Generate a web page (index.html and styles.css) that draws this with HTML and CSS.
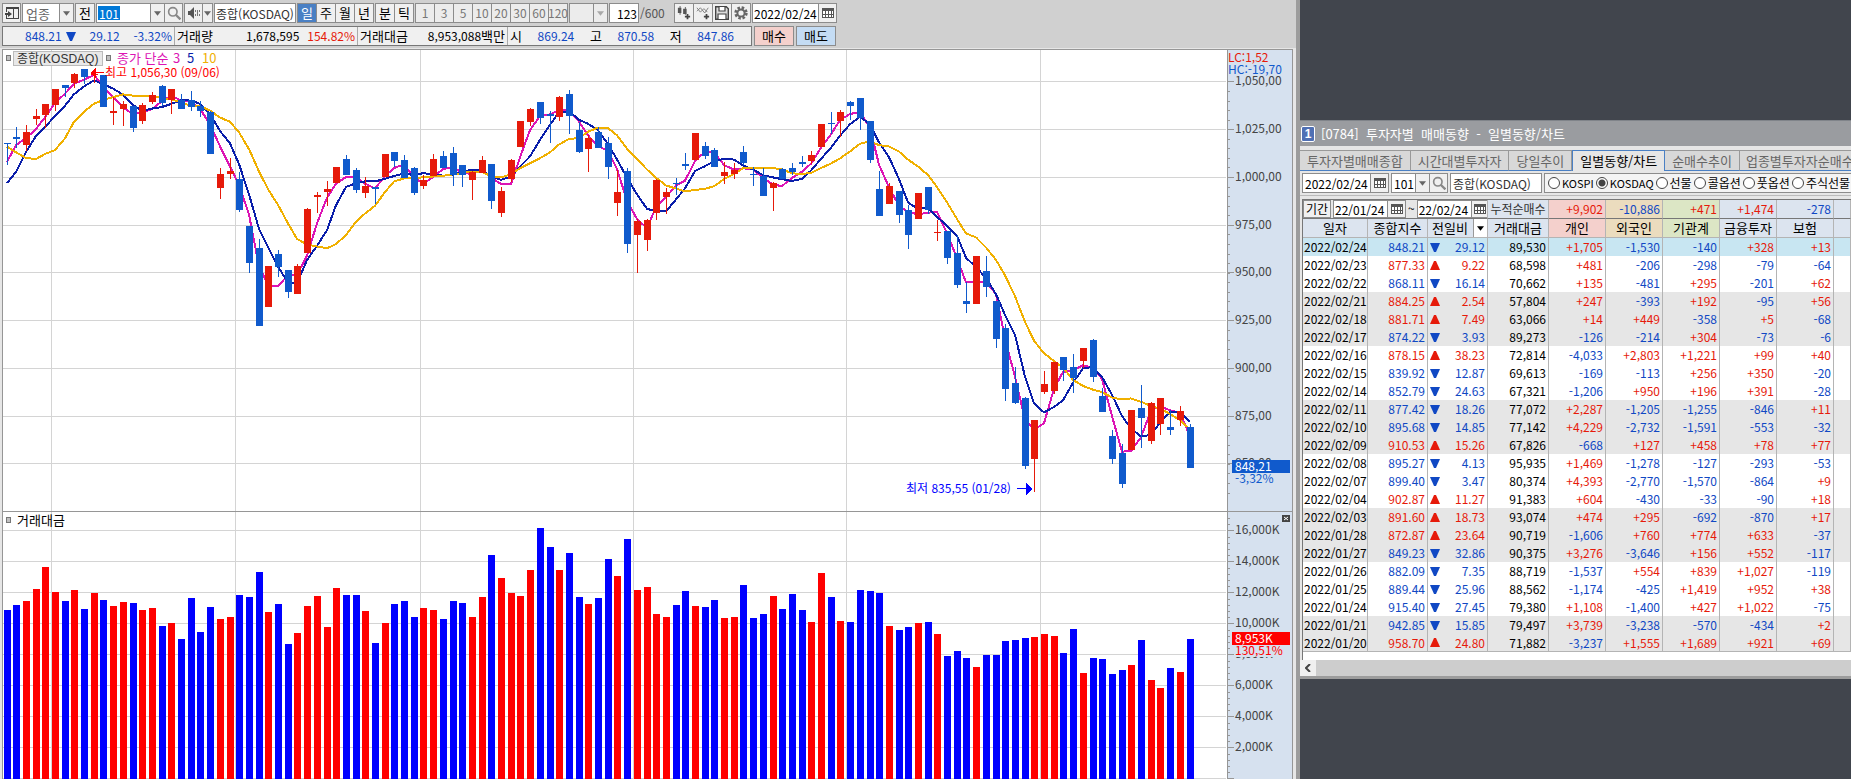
FILE: index.html
```html
<!DOCTYPE html>
<html lang="ko">
<head>
<meta charset="utf-8">
<title>종합(KOSDAQ)</title>
<link rel="stylesheet" href="styles.css">
</head>
<body>
<svg class="defs" aria-hidden="true">
  <symbol id="i-cal" viewBox="-1 -1 14 14"><path fill="#555" d="M0 1h12v10H0z"/><path fill="#fff" d="M1 4h2v3H1zM4 4h2v3H4zM7 4h2v3H7zM10 4h1v3h-1zM1 8h2v2H1zM4 8h2v2H4zM7 8h2v2H7zM10 8h1v2h-1z"/></symbol>
  <symbol id="i-search" viewBox="0 0 12 12"><circle cx="5" cy="5" r="3.6" fill="none" stroke="#888" stroke-width="1.4"/><path d="M7.5 7.5l4 4" stroke="#888" stroke-width="2"/></symbol>
  <symbol id="i-down" viewBox="0 0 8 5"><path fill="#666" d="M0 0h8L4 5z"/></symbol>
  <symbol id="i-panel" viewBox="0 0 14 14"><path fill="#444" d="M1 1h13v12H1v-4h1v3h6V3H2v3H1zM9 3v9h4V3z"/><path fill="#444" d="M0 7h3V5l4 3-4 3V9H0z"/></symbol>
  <symbol id="i-speaker" viewBox="0 0 14 14"><path fill="#555" d="M1 5h2l4-4v12L3 9H1z"/><path fill="#777" d="M8 4h1v2H8zM8 8h1v2H8zM10 4h1v6h-1zM12 4h1v2h-1zM12 8h1v2h-1z"/></symbol>
  <symbol id="i-candle" viewBox="0 0 16 16"><path fill="#555" d="M1 2h4v6H1zM3 0h1v10H3zM7 3h4v6H7zM9 1h1v9H9z"/><path fill="#444" d="M11 9h2v2h2v2h-2v2h-2v-2H9v-2h2z"/></symbol>
  <symbol id="i-line" viewBox="0 0 16 16"><path d="M1 6l4-4 5 6 4-6M1 2l4 5 4-4 4 4" fill="none" stroke="#777"/><path fill="#444" d="M11 9h2v2h2v2h-2v2h-2v-2H9v-2h2z"/></symbol>
  <symbol id="i-save" viewBox="0 0 14 14"><path d="M.7.7h10.6l2 2v10.600H.7z" fill="#ddd" stroke="#444" stroke-width="1.4"/><path d="M4 1v4h6V1M3 13V8h8v5" fill="#fff" stroke="#444" stroke-width="1.2"/></symbol>
  <symbol id="i-gear" viewBox="0 0 14 14"><circle cx="7" cy="7" r="5.2" fill="none" stroke="#666" stroke-width="3" stroke-dasharray="2.4 1.684"/><circle cx="7" cy="7" r="3.6" fill="none" stroke="#666" stroke-width="2"/></symbol>
</svg>
<main class="desktop">
  <section class="chart-window">
    <div class="toolbar">
      <button class="btn icon" aria-label="패널"><svg><use href="#i-panel"/></svg></button>
      <div class="combo"><input class="w37 muted" aria-label="구분" value="업종"><button class="btn drop" aria-label="구분 열기"><svg><use href="#i-down"/></svg></button></div>
      <button class="btn sq">전</button>
      <div class="combo"><input class="code" aria-label="업종 코드" value="101"><button class="btn drop" aria-label="종목 열기"><svg><use href="#i-down"/></svg></button><button class="btn icon" aria-label="검색"><svg><use href="#i-search"/></svg></button></div>
      <div class="combo"><button class="btn icon" aria-label="소리"><svg><use href="#i-speaker"/></svg></button><button class="btn tiny" aria-label="소리 열기"><svg><use href="#i-down"/></svg></button></div>
      <input class="w82" aria-label="종목명" value="종합(KOSDAQ)">
      <div class="combo"><button class="btn sq on">일</button><button class="btn sq">주</button><button class="btn sq">월</button><button class="btn sq">년</button></div>
      <div class="combo"><button class="btn sq">분</button><button class="btn sq">틱</button></div>
      <div class="combo off"><button class="btn sq">1</button><button class="btn sq">3</button><button class="btn sq">5</button><button class="btn sq">10</button><button class="btn sq">20</button><button class="btn sq">30</button><button class="btn sq">60</button><button class="btn sq">120</button></div>
      <div class="combo off"><button class="btn blank" aria-label="분 간격"></button><button class="btn drop" aria-label="간격 열기"><svg><use href="#i-down"/></svg></button></div>
      <div class="count"><input class="w30" aria-label="봉 개수" value="123"><span>/600</span></div>
      <div class="combo tools"><button class="btn icon" aria-label="지표 추가"><svg><use href="#i-candle"/></svg></button><button class="btn icon" aria-label="추세선 추가"><svg><use href="#i-line"/></svg></button><button class="btn icon" aria-label="저장"><svg><use href="#i-save"/></svg></button><button class="btn icon" aria-label="설정"><svg><use href="#i-gear"/></svg></button></div>
      <div class="combo"><input class="w67" aria-label="날짜" value="2022/02/24"><button class="btn icon" aria-label="달력"><svg><use href="#i-cal"/></svg></button></div>
    </div>
    <div class="quote">
      <div class="quote-box">
        <div class="cell c1 down"><span>848.21</span><svg viewBox="0 0 10 9"><path d="M0 0h10L6 9H4z"/></svg><span class="n2">29.12</span><span class="n3">-3.32%</span></div>
        <div class="cell c2"><b>거래량</b><span>1,678,595</span><span class="up n3">154.82%</span></div>
        <div class="cell c3"><b>거래대금</b><span>8,953,088<b>백만</b></span></div>
        <div class="cell c4"><b>시</b><span class="down">869.24</span><b>고</b><span class="down">870.58</span><b>저</b><span class="down">847.86</span></div>
      </div>
      <button class="btn trade buy">매수</button>
      <button class="btn trade sell">매도</button>
    </div>
    <div class="chart"><svg id="chart" viewBox="2 49 1291 730" role="img" aria-label="종합(KOSDAQ) 일봉 차트"></svg></div>
  </section>
  <section class="right">
    <div class="trend-window">
      <h1 class="title"><span class="badge">1</span>[0784]  투자자별  매매동향  -  일별동향/차트</h1>
      <nav class="tabs">
        <a href="#a">투자자별매매종합</a><a href="#b">시간대별투자자</a><a href="#c">당일추이</a><a href="#d" class="active">일별동향/차트</a><a href="#e">순매수추이</a><a href="#f" class="rest">업종별투자자순매수</a>
      </nav>
      <div class="filters">
        <div class="combo"><input class="w68" aria-label="조회일" value="2022/02/24"><button class="btn icon" aria-label="달력"><svg><use href="#i-cal"/></svg></button></div>
        <div class="combo"><input class="w24" aria-label="업종 코드" value="101"><button class="btn drop" aria-label="코드 열기"><svg><use href="#i-down"/></svg></button><button class="btn icon" aria-label="검색"><svg><use href="#i-search"/></svg></button></div>
        <input class="w92" aria-label="업종명" value="종합(KOSDAQ)">
        <div class="radios">
          <label class="en"><input type="radio" name="m">KOSPI</label><label class="en"><input type="radio" name="m" checked>KOSDAQ</label><label><input type="radio" name="m">선물</label><label><input type="radio" name="m">콜옵션</label><label><input type="radio" name="m">풋옵션</label><label><input type="radio" name="m">주식선물</label>
        </div>
      </div>
      <div class="sheet">
        <table>
          <colgroup><col class="k65"><col class="k60"><col class="k60"><col class="k61"><col class="k57"><col class="k57"><col class="k57"><col class="k57"><col class="k57"><col></colgroup>
          <thead>
            <tr class="sum">
              <th colspan="3"><div class="period"><button class="btn term">기간</button><div class="combo"><input class="w54" aria-label="시작일" value="22/01/24"><button class="btn icon" aria-label="시작일 달력"><svg><use href="#i-cal"/></svg></button></div><span>~</span><div class="combo"><input class="w54" aria-label="종료일" value="22/02/24"><button class="btn icon" aria-label="종료일 달력"><svg><use href="#i-cal"/></svg></button></div></div></th>
              <th class="lead">누적순매수</th><td class="pink up">+9,902</td><td class="tan down">-10,886</td><td class="green up">+471</td><td class="blue up">+1,474</td><td class="blue down">-278</td><td class="blue"></td>
            </tr>
            <tr class="head"><th>일자</th><th>종합지수</th><th><div class="sort">전일비<button aria-label="전일비 선택"><svg viewBox="0 0 8 5"><path d="M0 0h8L4 5z"/></svg></button></div></th><th>거래대금</th><th class="pink">개인</th><th class="tan">외국인</th><th class="green">기관계</th><th>금융투자</th><th>보험</th><th></th></tr>
          </thead>
          <tbody id="rows"></tbody>
        </table>
      </div>
      <div class="hscroll"><button aria-label="왼쪽으로"><svg viewBox="0 0 6 8"><path d="M5 0L1 4l4 4" fill="none" stroke="#444" stroke-width="2"/></svg></button><i></i></div>
    </div>
  </section>
</main>
<script src="app.js"></script>
</body>
</html>
```
FILE: styles.css
```css
* { box-sizing: border-box; }
body { margin: 0; overflow: hidden; font: 13px/16px "Noto Sans CJK KR", sans-serif; color: #000; }
.defs { position: absolute; width: 0; height: 0; }
.desktop { display: grid; grid-template-columns: 1300fr 551fr; height: 100vh; overflow: hidden; background: #41454d; }
.up { color: #e61a0a; fill: #e61a0a; }
.down { color: #1048c4; fill: #1048c4; }

input, button { font: inherit; color: inherit; margin: 0; border-radius: 0; }
input:not([type]) { height: 20px; border: 1px solid #8c8c8c; background: #fff; padding: 0 0 0 1px; font-size: 12px; min-width: 0; }
.btn { height: 20px; padding: 0; border: 1px solid #8c8c8c; background: #f0f0f0; display: flex; align-items: center; justify-content: center; flex: none; }
.btn.icon { width: 19px; }
.btn.icon svg { width: 14px; height: 14px; }
.btn.sq { width: 20px; }
.btn.drop { width: 15px; }
.btn.tiny { width: 11px; }
.btn.drop svg, .btn.tiny svg { width: 7px; height: 5px; }
.btn.blank { width: 25px; }
.btn.on { background: #4a80c4; color: #fff; }
.tools .btn.icon { width: 20px; }
.combo { display: flex; }
.combo > * + * { margin-left: -1px; }
.off { color: #777; }
.off .btn { background: #ececec; font-size: 12px; }
.off svg { opacity: .5; }
.w24 { width: 25px; } .w30 { width: 30px; } .w37 { width: 38px; } .w54 { width: 55px; }
.w67 { width: 67px; } .w68 { width: 69px; } .w82 { width: 82px; } .w92 { width: 92px; }
input.w30 { text-align: right; padding-right: 1px; }
input.w37 { color: #666; font-size: 13px; padding-left: 3px; }
input.w68, input.w24, input.w92 { padding-left: 2px; }
input.w82, input.w92 { color: #333; }
input.code { width: 55px; padding-left: 2px; color: #fff; background: linear-gradient(#0078d7, #0078d7) 1px 2px / 22px 14px no-repeat #fff; }

.chart-window { background: #d0d0d0; border-right: 4px solid #9c9c9c; overflow: hidden; }
.toolbar { display: flex; gap: 1px; padding: 3px 2px 0; }
.count { display: flex; align-items: center; font-size: 12px; width: 64px; color: #555; gap: 1px; }
.count input { color: #000; }
.quote { display: flex; gap: 2px; padding: 3px 2px 2px; }
.quote-box { width: 750px; height: 20px; display: flex; border: 1px solid #777; background: #f0f0f0; font-size: 12px; line-height: 18px; }
.quote b { font-weight: 400; font-size: 13px; }
.cell { display: flex; padding: 0 2px; align-items: center; border-right: 1px solid #aaa; }
.cell:last-child { border: 0; }
.c1 { width: 172px; padding-left: 22px; }
.c1 svg { width: 10px; height: 9px; margin-left: 4px; }
.c1 .n2, .c1 .n3 { margin-left: auto; }
.c2 { width: 183px; }
.c2 span:nth-child(2) { margin-left: auto; }
.c2 .n3 { margin-left: 8px; }
.c3 { width: 150px; justify-content: space-between; }
.c4 { flex: 1; justify-content: space-between; padding: 0 17px 0 2px; }
.trade { width: 40px; }
.buy { background: #f4d0cc; }
.sell { background: #c4dcf4; }
.chart { padding: 0 3px 0 2px; border-top: 1px solid #e6e6e6; background: #e6e6e6; }
.chart svg { display: block; width: 100%; height: auto; }
.chart text { font: 12px "Noto Sans CJK KR", sans-serif; }
.chart .ko { font-size: 13px; }
.chart .wide { font-family: "Liberation Sans", "Noto Sans CJK KR", sans-serif; }

.right { padding-top: 120px; min-width: 0; }
.trend-window { background: #e6e6e6; border-bottom: 3px solid #9c9c9c; overflow: hidden; }
.title { margin: 0 0 4px; height: 26px; padding-left: 1px; display: flex; align-items: center; gap: 6px; background: #9a9ca0; border-top: 1px solid #80848a; color: #fff; font-size: 13px; font-weight: 400; white-space: pre; }
.badge { width: 14px; height: 16px; border: 1px solid #fff; border-radius: 2px; background: #5070b4; font: bold 12px/14px "Liberation Sans", sans-serif; text-align: center; }
.tabs { display: flex; height: 21px; }
.tabs a { flex: none; padding: 0 7px; line-height: 19px; color: #666; text-decoration: none; white-space: nowrap; background: #d8d8d8; border: 1px solid #999; border-left: 0; border-bottom: 1px solid #4a80c4; }
.tabs a.active { background: #e6e6e6; color: #000; border: 1px solid #4a80c4; border-bottom: 0; }
.tabs a.rest { flex: 1 0 auto; padding: 0 6px; }
.filters { display: flex; gap: 2px; padding: 2px 0 2px 2px; border-bottom: 1px solid #bbb; }
.radios { flex: 1; display: flex; gap: 2px; height: 20px; border: 1px solid #8c8c8c; border-right: 0; background: #f4f4f4; padding-left: 3px; overflow: hidden; font-size: 12px; }
.radios label { flex: none; display: flex; align-items: center; gap: 2px; }
.radios .en { font-size: 11px; }
.radios input { appearance: none; width: 12px; height: 12px; margin: 0; border: 1px solid #444; border-radius: 50%; background: #fff; }
.radios input:checked { background: radial-gradient(circle, #444 3px, #fff 4px); }
.sheet { margin: 3px 0 0 2px; height: 461px; background: #fff; border-top: 1px solid #777; border-left: 1px solid #777; }
table { width: 100%; border-collapse: separate; border-spacing: 0; table-layout: fixed; }
.k65 { width: 65px; } .k60 { width: 60px; } .k61 { width: 61px; } .k57 { width: 57px; }
th, td { padding: 0 2px; height: 18px; line-height: 16px; font-weight: 400; text-align: right; white-space: nowrap; border-right: 1px solid #b4b4b4; }
td { font-size: 12px; }
th { text-align: center; font-size: 13px; background: #dce4ef; }
.sum th, .sum td { border-bottom: 1px solid #777; height: 19px; }
.sum th { padding: 0; color: #333; font-size: 12px; }
.head th { border-bottom: 1px solid #b4b4b4; height: 19px; }
.pink { background: #f4d0cc; } .tan { background: #ebdcbe; } .green { background: #dce6c5; } .blue { background: #dce4ef; }
.period { display: flex; gap: 2px; background: #e6e6e6; height: 18px; color: #000; overflow: hidden; }
.period .btn, .period input:not([type]) { height: 18px; }
.term { width: 28px; }
.sort { display: flex; align-items: center; justify-content: space-between; padding-left: 2px; margin-right: -2px; }
.sort button { width: 14px; height: 18px; padding: 0 3px; border: 1px solid #999; border-width: 0 0 0 1px; background: #fff; display: flex; align-items: center; }
.sort svg { width: 8px; height: 5px; }
.chg { display: flex; align-items: center; justify-content: space-between; }
.chg svg { width: 10px; height: 9px; }
tbody .day { text-align: left; padding: 0 0 0 1px; }
tbody tr.alt { background: #e6e6e6; }
tbody tr.now { background: #c8e6f2; }
tbody tr:last-child td { border-bottom: 1px solid #b4b4b4; }
.hscroll { display: flex; height: 16px; background: #f0f0f0; }
.hscroll button { width: 16px; padding: 0 5px; border: 0; background: none; display: flex; align-items: center; }
.hscroll i { flex: 1; background: #cdcdcd; }
```
FILE: app.js
```js
// Candles: direction, high, body top, body bottom, low (thirds of a pixel), volume top.
const raw = `b430 430 433 494 300|b381 411 416 444 285|r375 396 434 452 273|r327 348 356 375 237|r312 312 344 383 171|r267 267 314 332 246|b255 255 263 291 273|r219 222 249 264 240|b207 207 231 251 297|r218 221 226 248 249|b225 225 320 320 270|r291 333 338 375 288|r303 312 326 378 276|b318 318 383 395 279|r309 315 362 372 300|r276 285 305 312 294|b255 258 308 318 348|r267 267 299 342 339|b282 299 326 326 387|b273 300 320 332 264|b303 318 332 351 366|b333 336 461 461 291|r504 522 563 597 327|r474 513 521 537 321|b516 537 629 636 255|b678 678 789 819 261|b717 744 978 978 186|r798 798 921 921 306|b750 762 801 831 282|b810 810 876 894 402|r792 798 881 881 369|r624 627 759 759 288|r576 585 591 639 258|r543 567 575 618 351|r501 501 548 548 234|b465 477 524 524 255|b504 510 570 578 255|r531 558 579 594 303|b561 562 567 612 399|r462 462 530 530 339|b456 456 483 500 282|b465 480 533 533 273|b501 504 579 585 321|r525 540 558 567 294|r462 477 527 527 300|b453 468 503 503 327|b441 459 524 558 273|b495 495 524 561 279|r513 516 540 600 321|r468 480 519 519 261|b492 492 603 627 135|r561 573 639 651 204|r477 480 536 545 249|r363 363 441 441 258|r324 327 365 378 180|b306 306 354 372 54|b333 343 347 429 111|r288 291 350 362 180|b270 282 347 402 129|b365 390 456 459 261|r405 414 446 516 282|b381 396 444 444 264|b411 429 500 537 147|r510 576 609 648 198|b504 513 731 759 87|r658 663 705 819 240|r656 660 720 753 231|r537 540 639 660 312|r564 576 591 642 321|b534 549 553 585 285|b459 492 498 510 243|r399 399 480 480 288|b426 438 467 477 291|b444 450 500 500 270|r486 516 528 552 324|r489 510 522 537 321|b438 456 489 495 225|b501 522 526 558 324|b504 528 588 588 312|r546 549 564 633 258|b504 507 536 536 297|b489 504 515 524 252|b468 486 491 501 300|r453 465 483 492 336|r372 372 441 441 189|b336 369 373 402 261|r330 336 362 411 333|b303 306 318 360 336|b294 294 353 390 240|b363 363 480 489 243|b513 567 648 648 249|r549 558 612 612 348|b573 573 645 669 360|b615 630 705 747 351|r579 579 657 657 339|b561 561 630 642 336|r660 695 699 723 372|b693 693 774 792 438|b705 759 854 864 423|b846 903 912 939 444|r768 768 912 912 471|b768 813 860 891 435|b903 903 1016 1044 435|b972 984 1167 1203 393|b1101 1149 1209 1212 390|b1191 1194 1398 1407 384|r1260 1260 1377 1476 381|r1113 1152 1176 1182 372|r1086 1086 1173 1182 378|b1071 1071 1110 1143 429|b1062 1101 1134 1179 357|r1044 1044 1083 1104 489|b1017 1020 1131 1146 444|b1164 1188 1236 1236 447|b1290 1308 1377 1392 492|b1332 1359 1452 1464 480|r1230 1230 1350 1350 465|b1155 1224 1254 1344 390|r1206 1209 1323 1332 510|r1194 1194 1272 1305 534|b1230 1281 1290 1305 474|r1218 1233 1260 1278 486|b1272 1281 1404 1404 387`;
const bars = raw.split('|').map((s, i) => {
  const n = s.slice(1).split(' ').map(Number);
  return { up: s[0] === 'r', y: n.slice(0, 4).map(v => Math.round(v / 3)), v: 510 + Math.round(n[4] / 3), x: Math.floor(4 + i * 1183 / 122 + 0.02) };
});
let out = '';
const rect = (x, y, w, h, f, extra = '') => out += `<rect x="${x}" y="${y}" width="${w}" height="${h}" fill="${f}" ${extra}/>`;
const text = (x, y, s, f, cls = '') => out += `<text x="${x}" y="${y}" fill="${f}" class="${cls}">${s}</text>`;
out += '<g shape-rendering="crispEdges">';
rect(2, 49, 1291, 730, '#969696');
rect(3, 50, 1224, 461, '#fff'); rect(3, 512, 1224, 267, '#fff');
rect(1228, 50, 64, 729, '#d6e1ef'); rect(1228, 511, 64, 1, '#969696');
const prices = [81, 129, 177, 225, 272, 320, 368, 416, 463];
const vols = [530, 561, 592, 623, 654, 685, 716, 747, 778];
for (const y of [...prices, ...vols]) rect(3, y, 1223, 1, '#d4d4d4');
for (const x of [51, 235, 420, 633, 846, 1040]) { rect(x, 50, 1, 461, '#d4d4d4'); rect(x, 512, 1, 267, '#d4d4d4'); }
for (const y of [...prices, ...vols]) rect(1228, y, 6, 1, '#969696');
for (let k = 0; k < 43; k++) rect(1228, Math.round(91 + k * 9.56), 2, 1, '#969696');
for (let k = 0; k < 43; k++) rect(1228, Math.round(518 + k * 6.2), 2, 1, '#969696');
const close = bars.map(b => b.up ? b.y[1] : b.y[2]);
const average = (n, lead, colour) => {
  const pts = bars.map((b, i) => {
    const y = i < n - 1 ? lead[i] / 3 : close.slice(i - n + 1, i + 1).reduce((a, c) => a + c) / n;
    return `${b.x + 3},${y.toFixed(1)}`;
  });
  out += `<polyline points="${pts.join(' ')}" fill="none" stroke="${colour}" stroke-width="2"/>`;
};
average(3, [486, 435], '#dc14b4');
average(5, [549, 516, 456, 408], '#0a1eaa');
average(10, [440, 457, 474, 477, 462, 450, 415, 365, 335], '#f0b000');
for (const b of bars) {
  const f = b.up ? '#e61a0a' : '#105acc', [h, t, m, l] = b.y;
  rect(b.x + 3, h, 1, Math.max(1, l - h), f);
  rect(b.x, t, 7, Math.max(1, m - t), f);
  rect(b.x, b.v, 7, 779 - b.v, b.up ? '#f00' : '#00f');
}
rect(6.5, 55.5, 4, 5, '#c0c0c0', 'stroke="#777"'); rect(106.5, 55.5, 4, 5, '#c0c0c0', 'stroke="#777"'); rect(6.5, 517.5, 4, 5, '#c0c0c0', 'stroke="#777"');
rect(13.5, 51.5, 89, 14, '#e8e8e8', 'stroke="#bbb"');
out += '<path d="M90 73l6-5v10zM96 72h8v1h-8z" fill="#f00"/><path d="M1017 488h9v-5l6 6-6 6v-6h-9z" fill="#00f"/></g>';
text(17, 63, '종합(KOSDAQ)', '#333', 'wide');
text(117, 63, '종가 단순', '#dc14b4', 'ko'); text(173, 63, '3', '#dc14b4', 'ko'); text(187, 63, '5', '#0a1eaa', 'ko'); text(202, 63, '10', '#f0b000', 'ko');
text(105, 77, '최고 1,056,30 (09/06)', '#f00');
text(906, 493, '최저 835,55 (01/28)', '#00f');
text(17, 525, '거래대금', '#000', 'ko');
['1,050,00', '1,025,00', '1,000,00', '975,00', '950,00', '925,00', '900,00', '875,00', '850,00'].forEach((s, i) => text(1235, prices[i] + 4, s, '#444'));
['16,000K', '14,000K', '12,000K', '10,000K', '8,000K', '6,000K', '4,000K', '2,000K'].forEach((s, i) => text(1235, vols[i] + 4, s, '#444'));
rect(1228, 51, 63, 25, '#d6e1ef');
text(1228, 62, 'LC:1,52', '#e61a0a'); text(1228, 74, 'HC:-19,70', '#105acc');
rect(1232, 460, 58, 13, '#105acc'); text(1235, 471, '848,21', '#fff'); text(1235, 483, '-3,32%', '#105acc');
rect(1235, 645, 50, 12, '#d6e1ef');
rect(1232, 632, 58, 13, '#f00'); text(1235, 643, '8,953K', '#fff'); text(1235, 655, '130,51%', '#f00');
rect(1282, 515, 8, 7, '#444');
out += '<path d="M1284 517l4 3m0-3l-4 3" stroke="#fff"/>';
document.getElementById('chart').innerHTML = out;

const rows = `02/24 848.21 -29.12 89,530 +1,705 -1,530 -140 +328 +13
02/23 877.33 9.22 68,598 +481 -206 -298 -79 -64
02/22 868.11 -16.14 70,662 +135 -481 +295 -201 +62
02/21 884.25 2.54 57,804 +247 -393 +192 -95 +56
02/18 881.71 7.49 63,066 +14 +449 -358 +5 -68
02/17 874.22 -3.93 89,273 -126 -214 +304 -73 -6
02/16 878.15 38.23 72,814 -4,033 +2,803 +1,221 +99 +40
02/15 839.92 -12.87 69,613 -169 -113 +256 +350 -20
02/14 852.79 -24.63 67,321 -1,206 +950 +196 +391 -28
02/11 877.42 -18.26 77,072 +2,287 -1,205 -1,255 -846 +11
02/10 895.68 -14.85 77,142 +4,229 -2,732 -1,591 -553 -32
02/09 910.53 15.26 67,826 -668 +127 +458 +78 +77
02/08 895.27 -4.13 95,935 +1,469 -1,278 -127 -293 -53
02/07 899.40 -3.47 80,374 +4,393 -2,770 -1,570 -864 +9
02/04 902.87 11.27 91,383 +604 -430 -33 -90 +18
02/03 891.60 18.73 93,074 +474 +295 -692 -870 +17
01/28 872.87 23.64 90,719 -1,606 +760 +774 +633 -37
01/27 849.23 -32.86 90,375 +3,276 -3,646 +156 +552 -117
01/26 882.09 -7.35 88,719 -1,537 +554 +839 +1,027 -119
01/25 889.44 -25.96 88,562 -1,174 -425 +1,419 +952 +38
01/24 915.40 -27.45 79,380 +1,108 -1,400 +427 +1,022 -75
01/21 942.85 -15.85 79,497 +3,739 -3,238 -570 -434 +2
01/20 958.70 24.80 71,882 -3,237 +1,555 +1,689 +921 +69`;
document.getElementById('rows').innerHTML = rows.split('\n').map((line, i) => {
  const [d, idx, chg, amt, ...flow] = line.split(' ');
  const dir = chg[0] === '-' ? 'down' : 'up';
  const arrow = dir === 'down' ? 'M0 0h10L6 9H4z' : 'M4 0h2l4 9H0z';
  return `<tr class="${i ? (Math.floor(i / 3) % 2 ? 'alt' : '') : 'now'}"><td class="day">2022/${d}</td><td class="${dir}">${idx}</td><td class="${dir}"><div class="chg"><svg viewBox="0 0 10 9"><path d="${arrow}"/></svg>${chg.replace('-', '')}</div></td><td>${amt}</td>${flow.map(f => `<td class="${f[0] === '-' ? 'down' : 'up'}">${f}</td>`).join('')}<td></td></tr>`;
}).join('');
```
